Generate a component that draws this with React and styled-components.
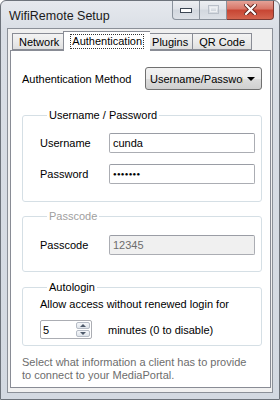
import React from 'react';
import styled, { createGlobalStyle } from 'styled-components';

const GlobalStyle = createGlobalStyle`
  html, body {
    margin: 0;
    padding: 0;
    background: #ffffff;
  }
  * {
    box-sizing: border-box;
  }
`;

const Window = styled.div`
  width: 280px;
  height: 400px;
  background: linear-gradient(#e6e9ee, #d9dee5 30px, #d3d9e1);
  border: 1px solid #6d737b;
  border-radius: 6px 6px 0 0;
  display: flex;
  flex-direction: column;
  overflow: hidden;
  font-family: "Liberation Sans", Arial, sans-serif;
  font-size: 11px;
  color: #000;
`;

const TitleBar = styled.div`
  height: 27px;
  flex-shrink: 0;
  display: flex;
  align-items: flex-start;
  padding-left: 8px;
`;

const Title = styled.div`
  font-size: 12.5px;
  line-height: 12px;
  margin-top: 9px;
  color: #1a1a1a;
`;

const Caption = styled.div`
  margin-left: auto;
  margin-right: 5px;
  display: flex;
  margin-top: -1px;
`;

const CaptionButton = styled.div`
  width: ${p => p.$w}px;
  height: 20px;
  display: flex;
  align-items: center;
  justify-content: center;
  border: 1px solid ${p => (p.$close ? '#7d3a33' : '#8a929c')};
  border-left: ${p => (p.$first ? '1px solid #8a929c' : 'none')};
  border-top: none;
  border-radius: ${p => (p.$first ? '0 0 0 4px' : p.$close ? '0 0 4px 0' : '0')};
  background: ${p =>
    p.$close
      ? 'linear-gradient(#e6a79d, #d9786a 45%, #c84634 55%, #d4654f)'
      : 'linear-gradient(#eef0f3, #e1e4e9 45%, #d3d8df 55%, #dde1e7)'};
`;

const Client = styled.div`
  flex: 1;
  min-height: 0;
  margin: 0 6px 6px;
  border: 1px solid #8b9098;
  background: #f0f0f0;
  padding: 2px 1px 4px 2px;
  display: flex;
  flex-direction: column;
  overflow: hidden;
`;

const TabRow = styled.div`
  display: flex;
  align-items: flex-end;
  height: 19px;
  flex-shrink: 0;
  padding-left: 2px;
  position: relative;
  z-index: 1;
`;

const Tab = styled.div`
  height: ${p => (p.$active ? 20 : 17)}px;
  margin: ${p => (p.$active ? '0 -2px -1px' : '0')};
  padding: 0 ${p => p.$pad ?? 5}px;
  display: flex;
  align-items: center;
  border: 1px solid #898c95;
  border-bottom: ${p => (p.$active ? 'none' : '1px solid #898c95')};
  border-left: ${p => (p.$active || p.$first ? '1px solid #898c95' : 'none')};
  border-right: ${p => (p.$active || p.$beforeActive ? 'none' : '1px solid #898c95')};
  background: ${p => (p.$active ? '#ffffff' : 'linear-gradient(#f3f3f3, #ebebeb 50%, #dfdfdf)')};
  white-space: nowrap;
  position: relative;
  z-index: ${p => (p.$active ? 2 : 1)};
`;

const FocusText = styled.span`
  border: 1px dotted #333;
  padding: 0 1px;
  line-height: 13px;
`;

const Panel = styled.div`
  flex: 1;
  min-height: 0;
  background: #ffffff;
  border: 1px solid #898c95;
  padding: 16px 8px 0 11px;
  display: flex;
  flex-direction: column;
`;

const MethodRow = styled.div`
  display: flex;
  align-items: center;
  height: 23px;
`;

const Label = styled.div`
  width: ${p => p.$w || 'auto'};
  flex-shrink: 0;
  color: ${p => (p.$muted ? '#6d6d6d' : '#000')};
  white-space: nowrap;
`;

const Select = styled.div`
  margin-left: auto;
  width: 117px;
  height: 23px;
  border: 1px solid #707070;
  border-radius: 3px;
  background: linear-gradient(#f2f2f2, #ebebeb 50%, #dddddd 51%, #cfcfcf);
  display: flex;
  align-items: center;
  padding-left: 4px;
  overflow: hidden;
`;

const SelectText = styled.span`
  flex: 1;
  overflow: hidden;
  white-space: nowrap;
`;

const Arrow = styled.span`
  width: 0;
  height: 0;
  flex-shrink: 0;
  border-left: 4px solid transparent;
  border-right: 4px solid transparent;
  border-top: 4px solid #000;
  margin: 0 6px 0 4px;
`;

const Group = styled.fieldset`
  margin: ${p => p.$top}px 0 0;
  padding: ${p => p.$pad || '11px 6px 17px 17px'};
  border: 1px solid #d5dfe5;
  border-radius: 3px;
  min-width: 0;
`;

const Legend = styled.legend`
  padding: 0 2px;
  margin-left: 7px;
  line-height: 14px;
  color: ${p => (p.$muted ? '#a0a0a0' : '#000')};
`;

const FieldRow = styled.div`
  display: flex;
  align-items: center;
  margin-top: ${p => p.$top || 0}px;
`;

const Input = styled.div`
  flex: 1;
  height: 20px;
  border: 1px solid #abadb3;
  border-top-color: #9a9da5;
  border-radius: 2px;
  background: ${p => (p.$disabled ? '#f0f0f0' : '#ffffff')};
  color: ${p => (p.$disabled ? '#6d6d6d' : '#000')};
  display: flex;
  align-items: center;
  padding-left: 3px;
  font-size: ${p => (p.$password ? '6px' : '11px')};
  letter-spacing: ${p => (p.$password ? '0.3px' : '0')};
`;

const Text = styled.div`
  line-height: 14px;
  margin-left: ${p => p.$left || 0}px;
  color: ${p => (p.$muted ? '#6d6d6d' : '#000')};
`;

const SpinRow = styled.div`
  display: flex;
  align-items: center;
  margin-top: 9px;
`;

const Spinner = styled.div`
  width: 52px;
  height: 19px;
  border: 1px solid #abadb3;
  border-radius: 2px;
  display: flex;
  align-items: stretch;
  background: #fff;
`;

const SpinValue = styled.div`
  flex: 1;
  display: flex;
  align-items: center;
  padding-left: 2px;
`;

const SpinButtons = styled.div`
  width: 15px;
  display: flex;
  flex-direction: column;
  padding: 1px 1px 1px 0;
  gap: 1px;
`;

const SpinButton = styled.div`
  flex: 1;
  border: 1px solid #b6bcc6;
  border-radius: 2px;
  background: linear-gradient(#f5f7fa, #dfe4ea);
  display: flex;
  align-items: center;
  justify-content: center;
`;

const SpinArrow = styled.span`
  width: 0;
  height: 0;
  border-left: 3px solid transparent;
  border-right: 3px solid transparent;
  ${p => (p.$up ? 'border-bottom: 3px solid #4e5a6b;' : 'border-top: 3px solid #4e5a6b;')}
`;

const Description = styled.div`
  margin-top: 10px;
  line-height: 13px;
  color: #6d6d6d;
`;

function MinimizeGlyph() {
  return (
    <svg width="12" height="6" viewBox="0 0 12 6">
      <rect x="0.5" y="1.5" width="11" height="4" fill="#ffffff" stroke="#3c4653" />
    </svg>
  );
}

function MaximizeGlyph() {
  return (
    <svg width="11" height="9" viewBox="0 0 11 9">
      <rect x="0.5" y="0.5" width="10" height="8" fill="none" stroke="#b9bfc8" />
      <rect x="2.5" y="2.5" width="6" height="4" fill="none" stroke="#eef0f3" />
    </svg>
  );
}

function CloseGlyph() {
  return (
    <svg width="13" height="11" viewBox="0 0 13 11">
      <path d="M2 1 L11 10 M11 1 L2 10" stroke="#5b1f18" strokeWidth="4" strokeLinecap="square" />
      <path d="M2 1 L11 10 M11 1 L2 10" stroke="#ffffff" strokeWidth="2.2" strokeLinecap="square" />
    </svg>
  );
}

export default function App() {
  return (
    <>
      <GlobalStyle />
      <Window>
        <TitleBar>
          <Title>WifiRemote Setup</Title>
          <Caption>
            <CaptionButton $w={28} $first>
              <MinimizeGlyph />
            </CaptionButton>
            <CaptionButton $w={27}>
              <MaximizeGlyph />
            </CaptionButton>
            <CaptionButton $w={47} $close>
              <CloseGlyph />
            </CaptionButton>
          </Caption>
        </TitleBar>
        <Client>
          <TabRow>
            <Tab $first $beforeActive $pad={6}>Network</Tab>
            <Tab $active $pad={6}>
              <FocusText>Authentication</FocusText>
            </Tab>
            <Tab $pad={4}>Plugins</Tab>
            <Tab $pad={6}>QR Code</Tab>
          </TabRow>
          <Panel>
            <MethodRow>
              <Label>Authentication Method</Label>
              <Select>
                <SelectText>Username/Password</SelectText>
                <Arrow />
              </Select>
            </MethodRow>

            <Group $top={18}>
              <Legend>Username / Password</Legend>
              <FieldRow>
                <Label $w="69px">Username</Label>
                <Input>cunda</Input>
              </FieldRow>
              <FieldRow $top={11}>
                <Label $w="69px">Password</Label>
                <Input $password>●●●●●●●</Input>
              </FieldRow>
            </Group>

            <Group $top={7} $pad="12px 6px 16px 17px">
              <Legend $muted>Passcode</Legend>
              <FieldRow>
                <Label $w="69px">Passcode</Label>
                <Input $disabled>12345</Input>
              </FieldRow>
            </Group>

            <Group $top={8} $pad="3px 6px 6px 17px">
              <Legend>Autologin</Legend>
              <Text>Allow access without renewed login for</Text>
              <SpinRow>
                <Spinner>
                  <SpinValue>5</SpinValue>
                  <SpinButtons>
                    <SpinButton>
                      <SpinArrow $up />
                    </SpinButton>
                    <SpinButton>
                      <SpinArrow />
                    </SpinButton>
                  </SpinButtons>
                </Spinner>
                <Text $left={16}>minutes (0 to disable)</Text>
              </SpinRow>
            </Group>

            <Description>
              Select what information a client has to provide
              <br />
              to connect to your MediaPortal.
            </Description>
          </Panel>
        </Client>
      </Window>
    </>
  );
}
